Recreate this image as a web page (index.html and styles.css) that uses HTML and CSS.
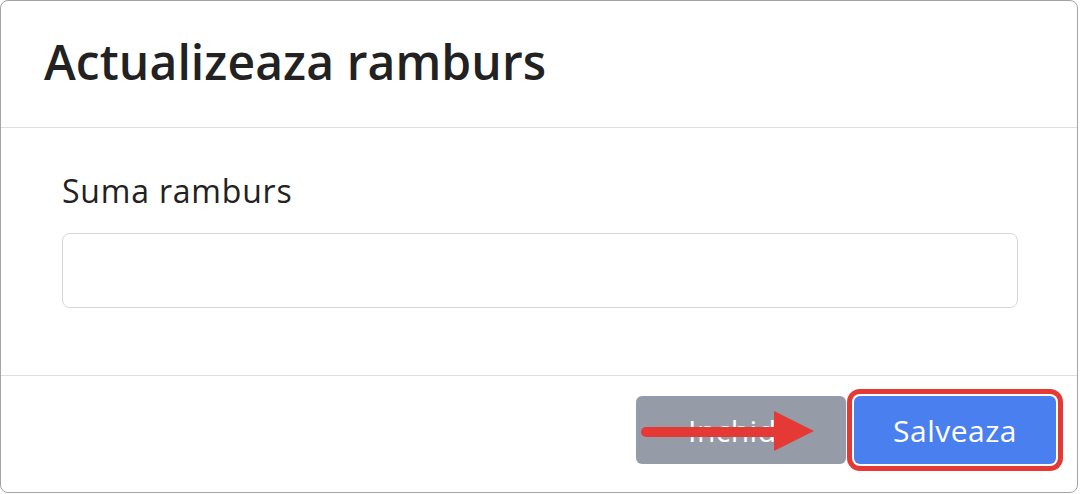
FILE: index.html
```html
<!DOCTYPE html>
<html lang="ro">
<head>
<meta charset="utf-8">
<title>Actualizeaza ramburs</title>
<link rel="stylesheet" href="styles.css">
</head>
<body>
<div class="modal">
  <div class="modal-header">
    <h1 class="modal-title">Actualizeaza ramburs</h1>
  </div>
  <div class="modal-body">
    <label class="field-label" for="suma">Suma ramburs</label>
    <input class="field-input" id="suma" type="text">
  </div>
  <div class="modal-footer">
    <button class="btn btn-gray" type="button">Inchide</button>
    <button class="btn btn-blue" type="button">Salveaza</button>
    <svg class="arrow" width="176" height="42" viewBox="0 0 176 42">
      <line x1="5" y1="21" x2="136" y2="21" stroke="#e53935" stroke-width="10" stroke-linecap="round"/>
      <polygon points="133,0 173,20 133,40" fill="#e53935"/>
    </svg>
  </div>
</div>
</body>
</html>
```
FILE: styles.css
```css
html, body {
  margin: 0;
  padding: 0;
  background: #ffffff;
}
body {
  font-family: "Open Sans", "Noto Sans", sans-serif;
  color: #212529;
}
.modal {
  position: relative;
  box-sizing: border-box;
  width: 1078px;
  height: 493px;
  border: 1px solid #a4a4a4;
  border-radius: 8px;
  display: flex;
  flex-direction: column;
  overflow: hidden;
  background: #fff;
}
.modal-header {
  box-sizing: border-box;
  height: 127px;
  border-bottom: 1px solid #dedede;
  display: flex;
  align-items: center;
  padding: 0 0 4px 43px;
}
.modal-title {
  margin: 0;
  font-size: 48px;
  font-weight: 600;
  letter-spacing: 0.1px;
  line-height: 1;
  color: #222;
}
.modal-body {
  box-sizing: border-box;
  height: 247px;
  padding: 43px 59px 0 61px;
  display: flex;
  flex-direction: column;
}
.field-label {
  font-size: 32px;
  line-height: 40px;
  letter-spacing: 0.8px;
  color: #222;
  margin-bottom: 22px;
}
.field-input {
  box-sizing: border-box;
  height: 75px;
  width: 100%;
  border: 1px solid #d3d7dd;
  border-radius: 8px;
  margin: 0;
  outline: none;
  font: inherit;
}
.modal-footer {
  position: relative;
  flex: 1;
  border-top: 1px solid #dedede;
  display: flex;
  justify-content: flex-end;
  align-items: flex-start;
  gap: 8px;
  padding: 20px 21px 0 0;
}
.btn {
  border: none;
  border-radius: 6px;
  height: 68px;
  font-family: inherit;
  font-size: 30px;
  letter-spacing: 0.5px;
  color: #fff;
  padding: 0;
  cursor: pointer;
}
.btn-gray {
  width: 210px;
  background: #959ca8;
}
.btn-blue {
  width: 202px;
  background: #4a7ff0;
  box-shadow: 0 0 0 2px #fff, 0 0 0 7px #e53935;
}
.arrow {
  position: absolute;
  left: 640px;
  top: 35px;
}
```
